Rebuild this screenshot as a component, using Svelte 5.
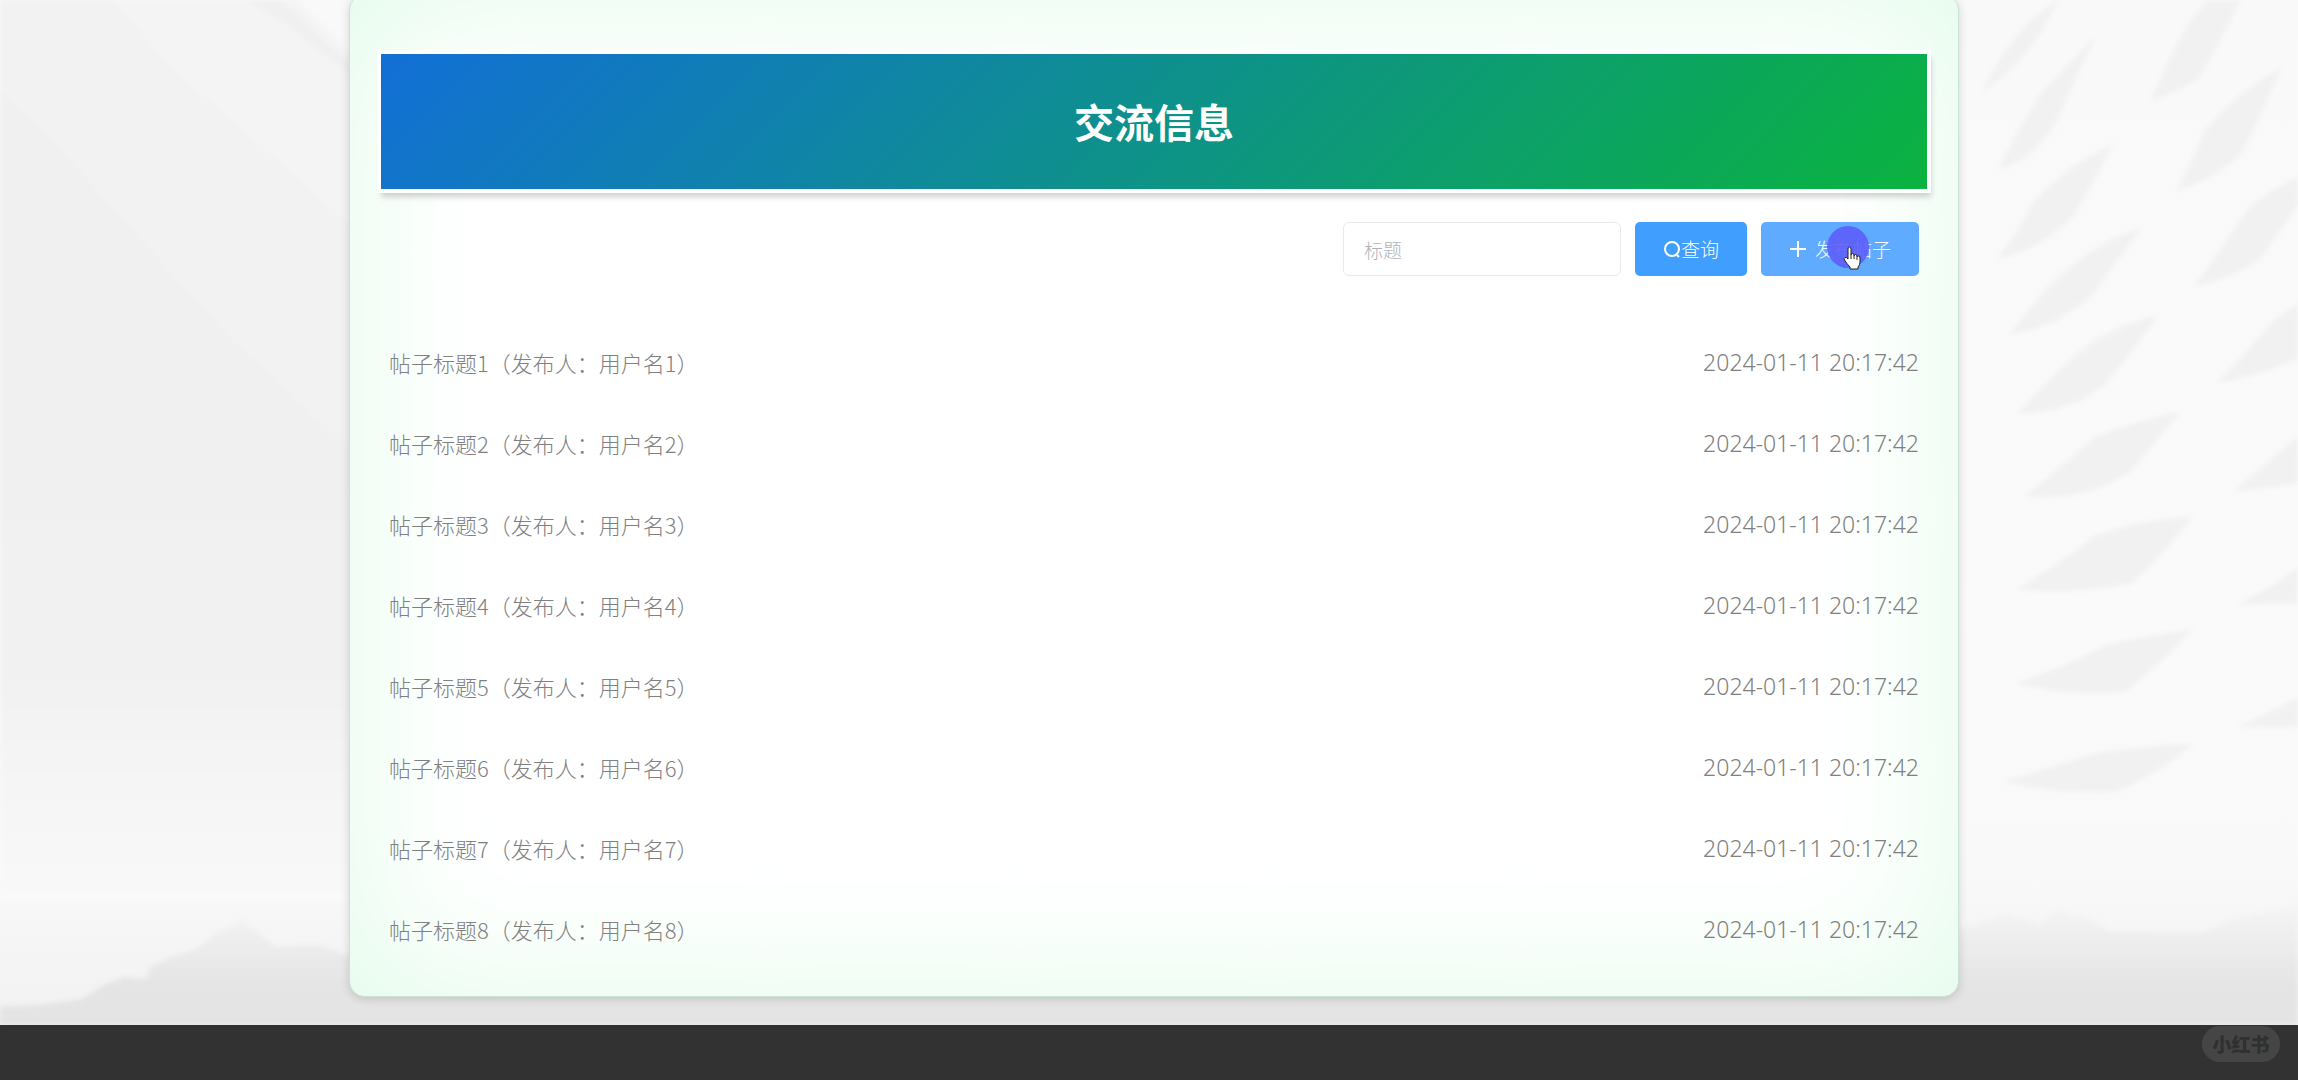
<script>
    let title = $state("");

    const time = "2024-01-11 20:17:42";
    const posts = [1, 2, 3, 4, 5, 6, 7, 8].map((n) => ({
        id: n,
        title: `帖子标题${n}`,
        user: `用户名${n}`,
        time
    }));

    // shadows of the wall relief, on a 358x900 canvas
    const petals = [
        "M50 92 Q70 50 98 20 L125 0 L118 14 Q92 66 50 92Z",
        "M68 168 Q84 132 110 90 L162 36 Q145 70 124 120 Q100 160 68 168Z",
        "M66 258 Q84 236 100 202 Q140 160 178 145 Q160 180 140 215 Q110 248 66 258Z",
        "M78 334 Q100 300 130 272 Q165 240 206 228 Q180 262 160 292 Q125 326 78 334Z",
        "M86 412 Q130 362 160 340 Q190 322 222 315 Q190 360 168 386 Q130 414 86 412Z",
        "M92 495 Q135 460 160 436 Q200 420 244 411 Q215 446 196 470 Q150 502 92 495Z",
        "M84 588 Q130 560 160 535 Q206 518 256 515 Q225 556 196 582 Q140 594 84 588Z",
        "M84 682 Q140 662 170 644 Q210 634 256 628 Q225 662 190 690 Q140 696 84 682Z",
        "M72 780 Q130 762 160 752 Q206 744 256 742 Q220 774 180 790 Q120 792 72 780Z",
        "M215 100 Q236 50 254 20 L270 0 L302 0 Q284 40 262 78 Q240 94 215 100Z",
        "M240 190 Q256 160 268 130 Q300 90 342 68 Q320 120 304 152 Q276 180 240 190Z",
        "M258 285 Q285 246 310 208 Q334 188 358 177 L358 205 Q336 236 322 258 Q290 280 258 285Z",
        "M280 382 Q310 350 334 320 L358 303 L358 358 Q320 376 280 382Z",
        "M296 490 Q335 455 358 436 L358 482 Q330 488 296 490Z",
        "M300 603 Q335 585 358 566 L358 602Z",
        "M300 725 Q335 710 358 696 L358 725Z"
    ];
</script>

<div class="page">
    <div class="backdrop" aria-hidden="true">
        <svg class="folds" viewBox="0 0 360 900" preserveAspectRatio="none">
            <defs>
                <linearGradient id="fold" x1="0" y1="0" x2="0" y2="1">
                    <stop offset="0" stop-color="#f0f0f0" />
                    <stop offset="0.7" stop-color="#f1f1f1" />
                    <stop offset="1" stop-color="#f9f9f9" />
                </linearGradient>
            </defs>
            <path fill="#f4f4f4" d="M0 0 H290 L360 70 V900 H0Z" />
            <path fill="#f2f2f2" d="M0 0 H110 L170 70 L250 140 L360 240 V900 H0Z" />
            <path fill="#f0f0f0" d="M240 0 L275 0 L350 70 V80 L280 24Z" />
            <path fill="url(#fold)" d="M0 90 L60 150 L140 240 L230 340 L360 460 V900 H0Z" />
        </svg>
        <svg class="petals" viewBox="0 0 358 900" preserveAspectRatio="none">
            {#each petals as d}
                <path {d} />
            {/each}
        </svg>
        <svg class="hills" viewBox="0 0 2298 140" preserveAspectRatio="none">
            <defs>
                <linearGradient id="hill" x1="0" y1="0" x2="0" y2="1">
                    <stop offset="0" stop-color="#f4f4f4" />
                    <stop offset="0.7" stop-color="#e4e4e4" />
                    <stop offset="1" stop-color="#e4e4e4" />
                </linearGradient>
            </defs>
            <path
                fill="url(#hill)"
                d="M0 122 L40 120 L82 114 L104 100 L124 92 L146 94 L150 82 L170 72 L196 64 L214 50 L232 40 L244 36 L256 46 L276 62 L296 60 L320 60 L346 70 L900 84 L1500 80 L1959 44 L2006 30 L2040 40 L2056 26 L2090 34 L2110 46 L2200 48 L2240 32 L2298 22 L2298 140 L0 140Z"
            />
        </svg>
    </div>

    <main class="content">
        <section class="card">
            <h1>交流信息</h1>

            <form class="search" onsubmit={(e) => e.preventDefault()}>
                <input type="text" placeholder="标题" aria-label="标题" bind:value={title} />
                <button type="submit" class="query">
                    <svg viewBox="0 0 18 18" width="18" height="18" aria-hidden="true">
                        <circle cx="9" cy="9" r="7" />
                        <path d="M13 14 L16 17" />
                    </svg>查询
                </button>
                <button type="button" class="add">
                    <svg viewBox="0 0 18 18" width="18" height="18" aria-hidden="true">
                        <path d="M9 1 V17 M1 9 H17" />
                    </svg>
                    <span>发布帖子</span>
                    <span class="press">
                        <svg class="hand" viewBox="0 0 18 24" width="18" height="24" aria-hidden="true">
                            <path
                                d="M5 13 V3 Q5 1 6.500 1 Q8 1 8 3 V9 Q8 7.500 9.500 7.500 Q11 7.500 11 9 V10 Q11 8.500 12.500 8.500 Q14 8.500 14 10 V11 Q14 9.800 15.500 10 Q17 10 17 12 V16 Q17 19 15 21 V23 H7 V21 Q4 18 1.500 14 Q0.500 12 2 11.500 Q3.500 11 5 13Z M8 9 V13 M11 10 V13 M14 11 V14"
                            />
                        </svg>
                    </span>
                </button>
            </form>

            <ul class="posts">
                {#each posts as post (post.id)}
                    <li>
                        <span>{post.title}（发布人：{post.user}）</span>
                        <time>{post.time}</time>
                    </li>
                {/each}
            </ul>
        </section>
    </main>

    <footer>
        <span class="mark">小红书</span>
    </footer>
</div>

<style>
    :global(body) {
        margin: 0;
        font-family: "Noto Sans CJK SC", "Noto Sans", sans-serif;
    }
    .page {
        position: relative;
        display: flex;
        flex-direction: column;
        min-height: 100vh;
        overflow: hidden;
    }
    .backdrop {
        position: absolute;
        inset: 0 0 55px;
        z-index: -1;
        background: linear-gradient(#f9f9f9, #fafafa 60%, #f9f9f9 85%, #f1f1f1);
    }
    .folds {
        position: absolute;
        top: 0;
        left: 0;
        width: 16%;
        height: 88%;
        filter: blur(2px);
    }
    .petals {
        position: absolute;
        top: 0;
        right: 0;
        width: 16%;
        height: 88%;
        fill: #f1f1f1;
        filter: blur(2px);
    }
    .hills {
        position: absolute;
        left: 0;
        bottom: 0;
        width: 100%;
        height: 140px;
        filter: blur(2px);
    }
    .content {
        flex: 1;
        display: grid;
        grid-template-columns: 349fr 1610fr 339fr;
        padding-bottom: 28px;
    }
    .card {
        grid-column: 2;
        box-sizing: border-box;
        margin-top: -6px;
        padding: 59px 31px 26px;
        border: 1px solid #cbe2d8;
        border-radius: 16px;
        background: #fff;
        box-shadow: inset 0 0 150px #dffbe8, 0 2px 10px rgba(0, 0, 0, 0.15);
    }
    h1 {
        margin: 0;
        color: #fff;
        font-size: 40px;
        font-weight: 700;
        line-height: 135px;
        text-align: center;
        background: linear-gradient(135deg, #126fd6, #0ab33f);
        box-shadow: 0 0 0 4px #fff, 2px 6px 6px 2px rgba(0, 0, 0, 0.18);
    }
    .search {
        display: flex;
        justify-content: flex-end;
        gap: 14px;
        padding: 33px 8px 46px;
    }
    .search input {
        box-sizing: border-box;
        width: 278px;
        height: 54px;
        padding: 0 20px;
        border: 1px solid #e8eaee;
        border-radius: 6px;
        color: #606266;
        background: #fff;
        font: inherit;
        font-size: 19px;
        font-weight: 300;
    }
    .search input::placeholder {
        color: #b0b3b8;
    }
    .search button {
        position: relative;
        display: flex;
        align-items: center;
        justify-content: center;
        height: 54px;
        padding: 0;
        border: 0;
        border-radius: 5px;
        color: #fff;
        font: inherit;
        font-size: 19px;
        font-weight: 300;
        line-height: 24px;
        cursor: pointer;
    }
    .query {
        width: 112px;
        background: #409eff;
    }
    .search .add {
        width: 158px;
        gap: 8px;
        background: #5fabff;
    }
    button svg {
        fill: none;
        stroke: #fff;
        stroke-width: 2;
    }
    .press {
        position: absolute;
        top: 4px;
        left: 66px;
        width: 42px;
        height: 42px;
        border-radius: 50%;
        background: rgba(93, 95, 250, 0.92);
    }
    .press .hand {
        position: absolute;
        top: 20px;
        left: 16px;
        fill: #fff;
        stroke: #222;
        stroke-width: 1;
    }
    .posts {
        margin: 0;
        padding: 0 8px;
        list-style: none;
    }
    .posts li {
        display: flex;
        justify-content: space-between;
        height: 81px;
        color: #808080;
        font-size: 22px;
        font-weight: 300;
        line-height: 81px;
    }
    .posts time {
        font-family: "Noto Sans", sans-serif;
        font-size: 23px;
    }
    footer {
        display: flex;
        align-items: flex-start;
        justify-content: flex-end;
        box-sizing: border-box;
        height: 55px;
        padding: 1px 18px;
        background: #323232;
    }
    .mark {
        width: 78px;
        border-radius: 18px;
        color: #303030;
        background: #454545;
        font-size: 19px;
        font-weight: 900;
        line-height: 36px;
        text-align: center;
    }
</style>
